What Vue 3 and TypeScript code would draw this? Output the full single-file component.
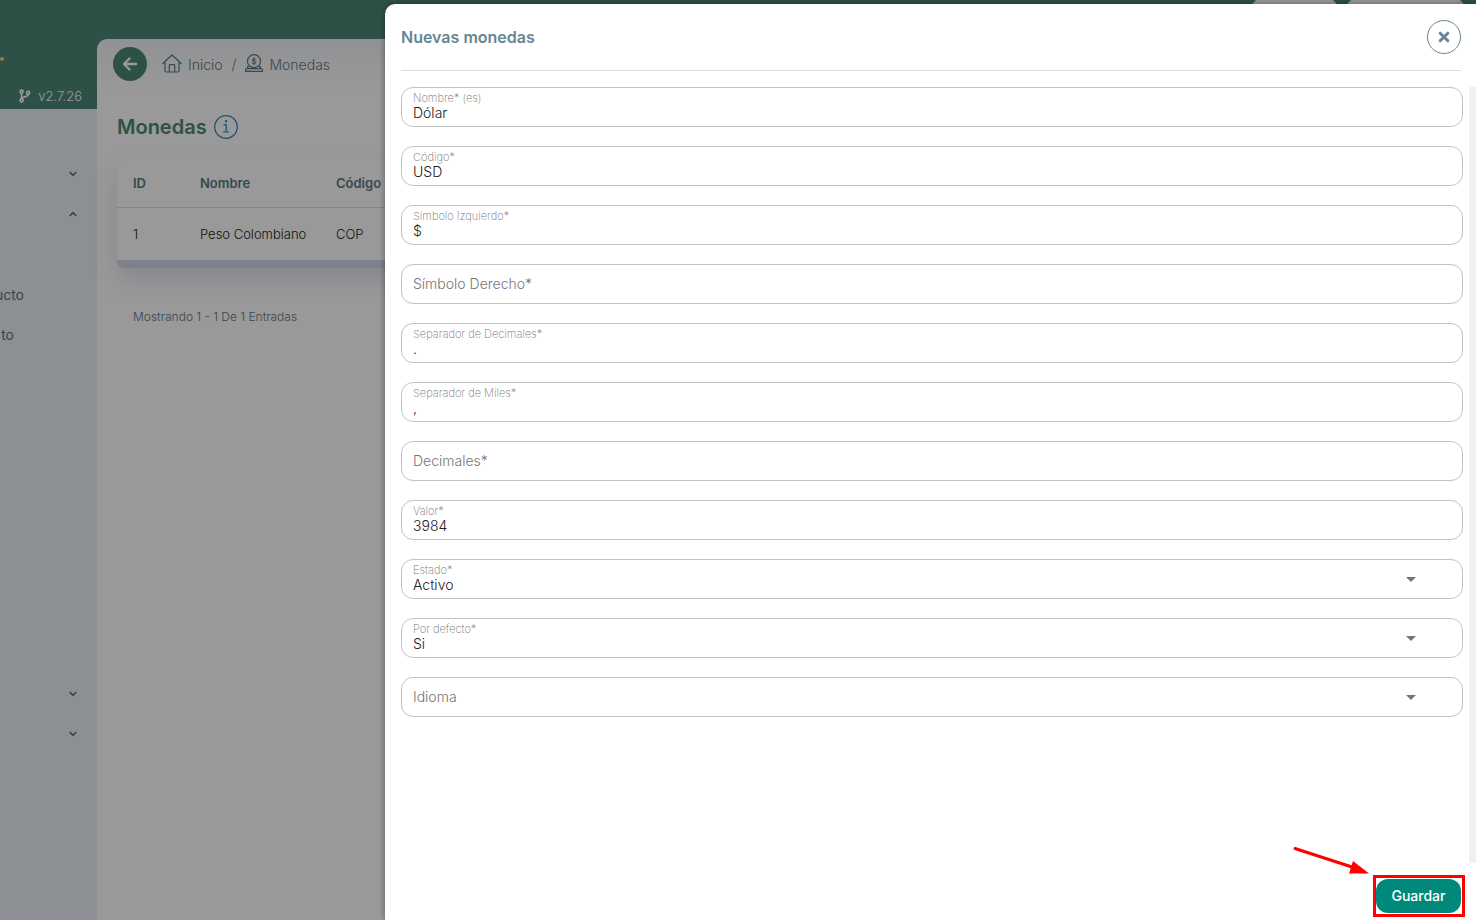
<script setup lang="ts">
import { reactive } from 'vue'

type Field = {
  id: string
  label: string
  kind: 'text' | 'select'
}

const fields: Field[] = [
  { id: 'nombre', label: 'Nombre* (es)', kind: 'text' },
  { id: 'codigo', label: 'Código*', kind: 'text' },
  { id: 'izquierdo', label: 'Símbolo Izquierdo*', kind: 'text' },
  { id: 'derecho', label: 'Símbolo Derecho*', kind: 'text' },
  { id: 'sepdec', label: 'Separador de Decimales*', kind: 'text' },
  { id: 'sepmil', label: 'Separador de Miles*', kind: 'text' },
  { id: 'decimales', label: 'Decimales*', kind: 'text' },
  { id: 'valor', label: 'Valor*', kind: 'text' },
  { id: 'estado', label: 'Estado*', kind: 'select' },
  { id: 'defecto', label: 'Por defecto*', kind: 'select' },
  { id: 'idioma', label: 'Idioma', kind: 'select' },
]

const values = reactive<Record<string, string>>({
  nombre: 'Dólar',
  codigo: 'USD',
  izquierdo: '$',
  derecho: '',
  sepdec: '.',
  sepmil: ',',
  decimales: '',
  valor: '3984',
  estado: 'Activo',
  defecto: 'Si',
  idioma: '',
})

type Row = { text?: string; chevron?: 'down' | 'up' }
const menu: Row[] = [
  { chevron: 'down' }, { chevron: 'up' }, {}, { text: 'ucto' }, { text: 'to' },
  {}, {}, {}, {}, {}, {}, {}, {}, { chevron: 'down' }, { chevron: 'down' },
]
</script>

<template>
  <div class="app">
    <header class="topbar">
      <span class="pill short"></span>
      <span class="pill long"></span>
    </header>

    <div class="columns">
      <aside class="sidebar">
        <div class="brand">
          <span class="dot"></span>
          <div class="version">
            <svg width="12" height="14" viewBox="0 0 12 14" fill="none" stroke="currentColor" stroke-width="1.6">
              <circle cx="2.6" cy="2.6" r="1.5" /><circle cx="2.6" cy="11.4" r="1.5" /><circle cx="9.2" cy="3.8" r="1.5" />
              <path d="M2.6 4v6M9.2 5.2c0 3-3.6 1.8-6 3.8" />
            </svg>
            <span>v2.7.26</span>
          </div>
        </div>
        <nav class="menu">
          <div v-for="(row, i) in menu" :key="i" class="menu-row">
            <a v-if="row.text" href="#">{{ row.text }}</a>
            <svg v-if="row.chevron" :class="['chevron', row.chevron]" width="8" height="6" viewBox="0 0 8 6" fill="none" stroke="currentColor" stroke-width="1.6">
              <path d="M0.7 1 4 4.3 7.3 1" />
            </svg>
          </div>
        </nav>
      </aside>

      <main class="content">
        <div class="crumbs">
          <button class="back" type="button" aria-label="Volver">
            <svg width="16" height="16" viewBox="0 0 16 16" fill="none" stroke="currentColor" stroke-width="2.4" stroke-linecap="round" stroke-linejoin="round">
              <path d="M14 8H2.5M7.5 2.5 2 8l5.5 5.5" />
            </svg>
          </button>
          <a class="home" href="#">
            <svg width="20" height="20" viewBox="0 0 20 20" fill="none" stroke="currentColor" stroke-width="1.2" stroke-linejoin="round" stroke-linecap="round">
              <path d="M.8 9.5 10 1l9.200 8.500M3 7.700V16.500q0 1.500 1.500 1.500h11q1.500 0 1.500-1.500V7.700M7.300 18v-6.500q0-.8.8-.8h3.800q.8 0 .8.800V18" />
            </svg>
            <span>Inicio</span>
          </a>
          <span class="slash">/</span>
          <a class="current" href="#">
            <svg width="18" height="20" viewBox="0 0 18 20" fill="none" stroke="currentColor" stroke-width="1.2" stroke-linejoin="round" stroke-linecap="round">
              <circle cx="9" cy="7.2" r="6.5" />
              <path stroke-width="1" d="M10.900 5.700c-.2-1.200-3.800-1.200-3.800.2 0 1.500 3.800 1.100 3.800 2.700 0 1.500-3.600 1.500-3.900.1M9 3.600v7.200" />
              <path d="M3.600 12.600H2.500V14.600L.6 15v2.400h16.800V15l-1.900-.4v-2h-1.100M2.500 14.600h13" />
            </svg>
            <span>Monedas</span>
          </a>
        </div>

        <h1 class="title">
          Monedas
          <svg width="24" height="24" viewBox="0 0 24 24" fill="none" stroke="currentColor" stroke-width="1.2">
            <circle cx="12" cy="12" r="11.3" />
            <path d="M9.500 9.700h2.700v7.300M9.200 17h5.800" /><circle cx="12" cy="6.300" r=".6" fill="currentColor" />
          </svg>
        </h1>

        <div class="card">
          <table>
            <thead>
              <tr><th class="c-id">ID</th><th class="c-name">Nombre</th><th>Código</th></tr>
            </thead>
            <tbody>
              <tr><td>1</td><td>Peso Colombiano</td><td>COP</td></tr>
            </tbody>
          </table>
          <div class="bar"></div>
        </div>
        <p class="count">Mostrando 1 - 1 De 1 Entradas</p>
      </main>
    </div>

    <div class="backdrop"></div>

    <section class="drawer" role="dialog" aria-labelledby="drawer-title">
      <div class="drawer-head">
        <h2 id="drawer-title">Nuevas monedas</h2>
        <button class="close" type="button" aria-label="Cerrar">
          <svg width="12" height="12" viewBox="0 0 12 12" fill="none" stroke="currentColor" stroke-width="3" stroke-linecap="round">
            <path d="M2.200 2.200 9.800 9.800M9.800 2.200 2.200 9.800" />
          </svg>
        </button>
      </div>

      <div class="drawer-body">
        <form class="form" @submit.prevent>
          <div v-for="f in fields" :key="f.id" :class="['field', { filled: values[f.id] }]">
            <label :for="f.id">{{ f.label }}</label>
            <input v-if="f.kind === 'text'" :id="f.id" v-model="values[f.id]" type="text" />
            <template v-else>
              <select :id="f.id" v-model="values[f.id]">
                <option :value="values[f.id]">{{ values[f.id] }}</option>
              </select>
              <svg class="caret" width="10" height="5" viewBox="0 0 10 5"><path d="M0 0h10L5 5z" fill="currentColor" /></svg>
            </template>
          </div>
        </form>
        <div class="track"></div>
      </div>

      <footer class="drawer-foot">
        <div class="save-wrap">
          <button class="save" type="button">Guardar</button>
          <svg class="pointer" width="78" height="32" viewBox="0 0 78 32">
            <path d="M3 3.500 60 22" stroke="#f00" stroke-width="3" stroke-linecap="round" />
            <path d="M77 28.500 57 28.500 61 16z" fill="#f00" />
          </svg>
        </div>
      </footer>
    </section>
  </div>
</template>

<style>
body {
  margin: 0;
}
</style>

<style scoped>
* {
  box-sizing: border-box;
}
.app {
  position: relative;
  min-height: 100vh;
  display: flex;
  flex-direction: column;
  overflow: hidden;
  background: #4e8877;
  color: #222;
  font-family: Inter, "Open Sans", sans-serif;
  font-weight: 300;
}
button,
input,
select {
  font: inherit;
  color: inherit;
}
a {
  color: inherit;
  text-decoration: none;
}
.topbar {
  height: 39px;
  display: flex;
  justify-content: flex-end;
  gap: 8px;
  padding-right: 11px;
}
.pill {
  height: 36px;
  margin-top: -2px;
  border-radius: 12px;
  background: #fff;
}
.short {
  width: 87px;
}
.long {
  width: 119px;
}
.columns {
  flex: 1;
  display: flex;
}
.sidebar {
  width: 97px;
  flex: none;
  display: flex;
  flex-direction: column;
  background: #e9eff6;
}
.brand {
  height: 70px;
  display: flex;
  flex-direction: column;
  justify-content: space-between;
  padding: 18px 15px 4px 0;
  background: #4e8877;
}
.dot {
  width: 4px;
  height: 4px;
  border-radius: 2px;
  background: #f2d388;
}
.version {
  display: flex;
  align-items: center;
  justify-content: flex-end;
  gap: 7px;
  color: #fff;
  font-size: 13px;
  line-height: 18px;
  font-weight: 300;
}
.menu {
  padding-top: 45px;
}
.menu-row {
  height: 40px;
  display: flex;
  align-items: center;
  padding-right: 20px;
  color: #607079;
  font-size: 14px;
  font-weight: 400;
}
.menu-row a {
  width: 24px;
  display: flex;
  justify-content: flex-end;
}
.menu-row:nth-child(5) a {
  width: 14px;
}
.chevron {
  margin-left: auto;
}
.up {
  transform: rotate(180deg);
}
.content {
  flex: 1;
  min-width: 0;
  border-radius: 10px 0 0 0;
  background: linear-gradient(#f2f3f8, #fff 50px);
}
.crumbs {
  display: flex;
  align-items: center;
  padding: 8px 16px;
  color: #5d7984;
  font-size: 14px;
}
.back {
  width: 34px;
  height: 34px;
  display: grid;
  place-items: center;
  padding: 0;
  margin-right: 15px;
  border: 0;
  border-radius: 50%;
  background: #4e8877;
  color: #fff;
}
.home,
.current {
  display: flex;
  align-items: center;
  gap: 6px;
}
.slash {
  margin: 0 9px;
}
.title {
  display: flex;
  align-items: center;
  gap: 7px;
  margin: 18px 20px 13px;
  color: #4e8877;
  font-size: 20px;
  line-height: 40px;
  height: 40px;
  font-weight: 600;
}
.title svg {
  color: #3487b7;
}
.card {
  margin: 0 16px 0 20px;
  border-radius: 6px;
  box-shadow: 0 12px 24px rgba(90, 100, 150, 0.18);
  overflow: hidden;
}
.card table {
  width: 100%;
  border-collapse: collapse;
  background: #fff;
  font-size: 13px;
}
.card th,
.card td {
  text-align: left;
  padding: 0 0 0 16px;
}
.card th {
  height: 47px;
  color: #5d7984;
  font-weight: 600;
}
.card td {
  height: 53px;
  border-top: 1px solid #d9dcde;
  font-weight: 300;
}
.c-id {
  width: 67px;
}
.c-name {
  width: 136px;
}
.bar {
  height: 8px;
  background: #d3d7ea;
}
.count {
  margin: 40px 36px;
  color: #5d7984;
  font-size: 12px;
  line-height: 18px;
}
.backdrop {
  position: absolute;
  inset: 0;
  background: rgba(0, 0, 0, 0.4);
}
.drawer {
  position: absolute;
  inset: 4px 0 0 385px;
  display: flex;
  flex-direction: column;
  border-radius: 10px 0 0 0;
  background: #fff;
  box-shadow: 0 0 6px rgba(0, 0, 0, 0.4);
}
.drawer-head {
  height: 67px;
  display: flex;
  align-items: center;
  justify-content: space-between;
  margin: 0 15px 16px 16px;
  border-bottom: 1px solid #ddd;
}
.drawer-head h2 {
  margin: 0;
  color: #678594;
  font-size: 16px;
  font-weight: 600;
}
.close {
  width: 34px;
  height: 34px;
  display: grid;
  place-items: center;
  padding: 0;
  border: 1px solid #678594;
  border-radius: 50%;
  background: #fff;
  color: #678594;
}
.drawer-body {
  flex: 1;
  min-height: 0;
  display: flex;
  gap: 6px;
  padding-left: 16px;
}
.form {
  flex: 1;
  display: flex;
  flex-direction: column;
  gap: 19px;
}
.track {
  width: 7px;
  background: #f1f1f1;
}
.field {
  position: relative;
  height: 40px;
  border: 1px solid #c2c2c2;
  border-radius: 12px;
  font-size: 14px;
}
.field label {
  position: absolute;
  left: 11px;
  top: 9px;
  color: #757575;
  line-height: 20px;
  pointer-events: none;
}
.filled label {
  top: 3px;
  font-size: 11px;
  line-height: 14px;
  font-weight: 200;
}
.field input,
.field select {
  width: 100%;
  height: 100%;
  padding: 10px 11px 0;
  border: 0;
  border-radius: 12px;
  outline: 0;
  appearance: none;
  background: transparent;
}
.caret {
  position: absolute;
  right: 46px;
  top: 17px;
  color: #757575;
}
.drawer-foot {
  height: 57px;
  display: flex;
  justify-content: flex-end;
  padding: 12px 11px 3px;
}
.save-wrap {
  position: relative;
  padding: 1px 1px 1px 0;
  border: 3px solid #f00;
}
.save {
  width: 85px;
  height: 34px;
  padding: 0;
  border: 0;
  border-radius: 12px;
  background: #00897b;
  color: #fff;
  font-size: 14px;
  line-height: 20px;
  font-weight: 500;
}
.pointer {
  position: absolute;
  right: 92px;
  bottom: 37px;
}
</style>
